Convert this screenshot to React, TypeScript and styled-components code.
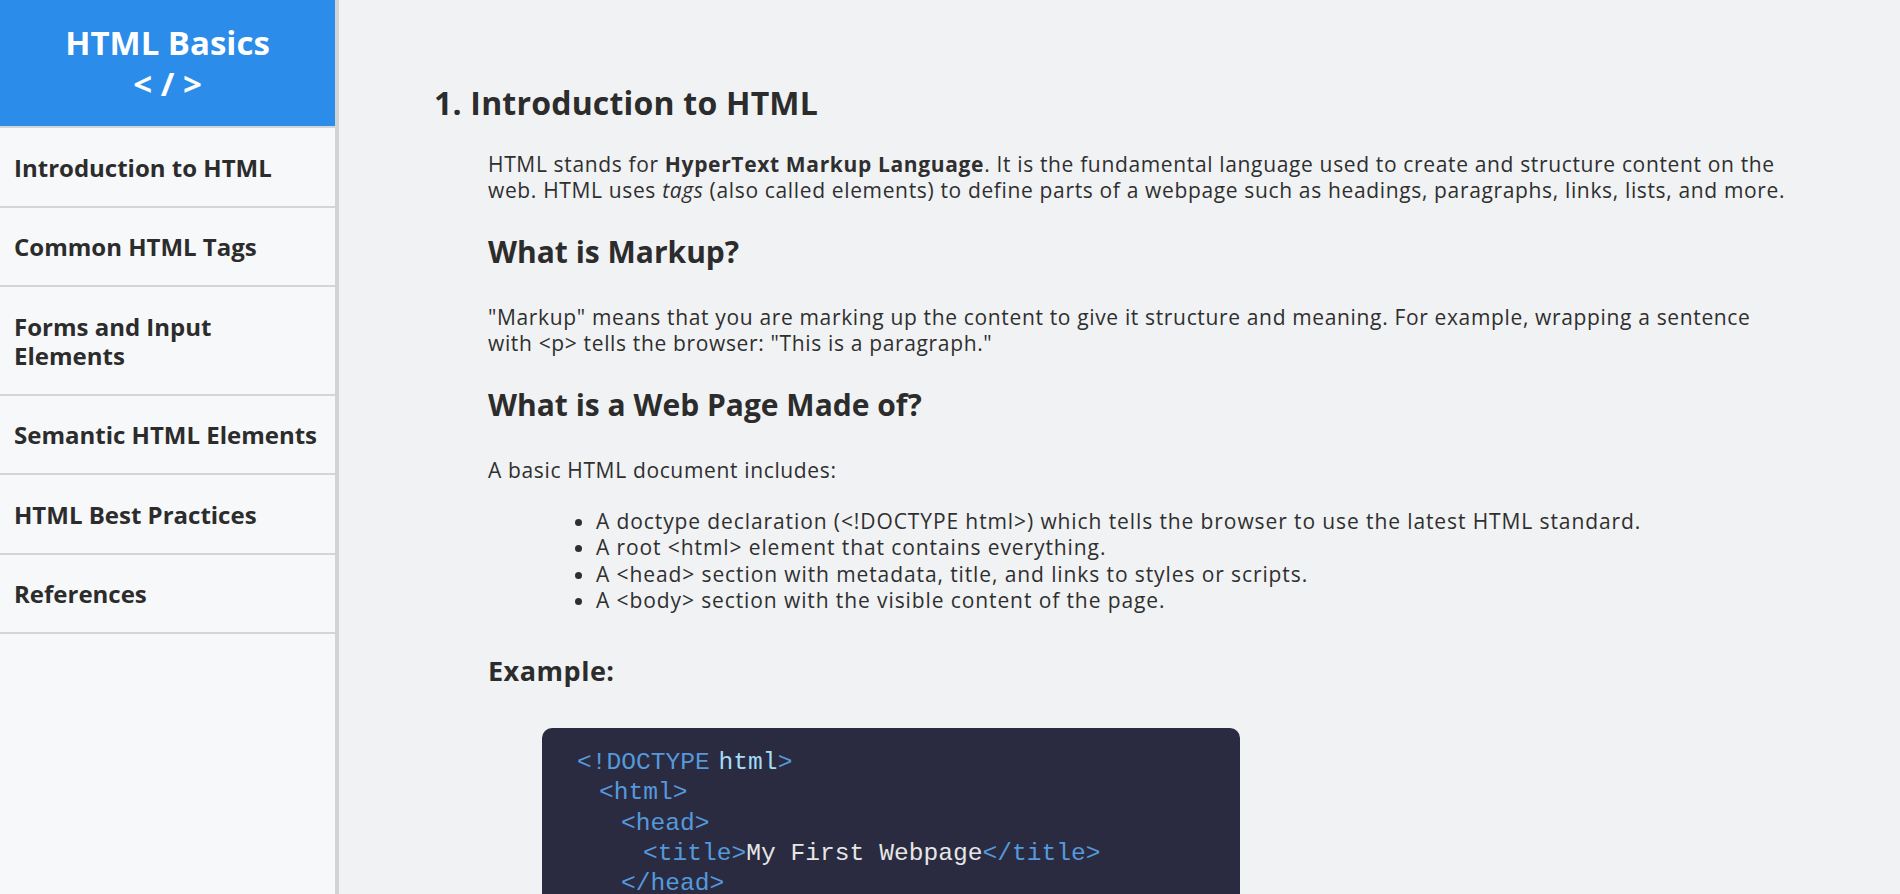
import React from "react";
import styled, { createGlobalStyle } from "styled-components";

const GlobalStyle = createGlobalStyle`
  html, body {
    margin: 0;
    padding: 0;
    background: #f1f2f4;
  }
  body {
    font-family: "Open Sans", "Noto Sans", sans-serif;
    color: #2f2f2f;
  }
  * { box-sizing: border-box; }
`;

const Layout = styled.div`
  display: flex;
  height: 100vh;
  overflow: hidden;
`;

const Sidebar = styled.aside`
  width: 339px;
  flex-shrink: 0;
  background: #f7f8fa;
  border-right: 4px solid #d2d3d5;
  display: flex;
  flex-direction: column;
`;

const Brand = styled.header`
  background: #2b8de9;
  color: #ffffff;
  text-align: center;
  font-weight: 700;
  font-size: 33px;
  line-height: 41px;
  padding: 22px 0 22px;
  border-bottom: 2px solid #d4d5d7;
`;

const NavList = styled.ul`
  list-style: none;
  margin: 0;
  padding: 0;
`;

const NavItem = styled.li`
  padding: 24.5px 10px 24px 14px;
  font-size: 24px;
  line-height: 29px;
  font-weight: 700;
  color: #2c2c2c;
  border-bottom: 2px solid #d4d5d7;
`;

const Main = styled.main`
  flex: 1;
  min-width: 0;
  padding: 83px 95px 0 95px;
  overflow: hidden;
`;

const Title = styled.h1`
  margin: 0;
  font-size: 32px;
  line-height: 40px;
  letter-spacing: 0.2px;
  font-weight: 700;
  color: #2c2c2c;
`;

const Body = styled.section`
  padding-left: 54px;
  padding-top: 28px;
`;

const Para = styled.p`
  margin: 0;
  font-size: 21px;
  line-height: 26px;
  letter-spacing: 0.65px;
`;

const SubTitle = styled.h2`
  margin: 31px 0 34px;
  font-size: 30px;
  line-height: 36px;
  font-weight: 700;
  color: #2c2c2c;
`;

const Bullets = styled.ul`
  margin: 25px 0 0;
  padding-left: 108px;
  li {
    font-size: 21px;
    line-height: 26.3px;
    letter-spacing: 0.9px;
  }
`;

const Example = styled.h3`
  margin: 43px 0 42px;
  font-size: 27px;
  line-height: 30px;
  letter-spacing: 0.5px;
  font-weight: 700;
  color: #2c2c2c;
`;

const CodeBlock = styled.div`
  margin-left: 108px;
  width: 698px;
  background: #2a2b40;
  border-radius: 10px;
  padding: 20px 35px 24px;
  font-family: "Liberation Mono", "Courier New", monospace;
  font-size: 24.6px;
  line-height: 30.25px;
  color: #e6e6e6;
`;

const CodeLine = styled.div<{ $level: number }>`
  padding-left: ${(p) => p.$level * 22}px;
  white-space: pre;
`;

const Doctype = styled.span`
  word-spacing: -6px;
`;

const Tag = styled.span`
  color: #5599dc;
`;

const Attr = styled.span`
  color: #a4dcf7;
`;

const navItems = [
  "Introduction to HTML",
  "Common HTML Tags",
  "Forms and Input Elements",
  "Semantic HTML Elements",
  "HTML Best Practices",
  "References",
];

export default function App() {
  return (
    <>
      <GlobalStyle />
      <Layout>
        <Sidebar>
          <Brand>
            HTML Basics
            <br />
            &lt; / &gt;
          </Brand>
          <NavList>
            {navItems.map((n) => (
              <NavItem key={n}>{n}</NavItem>
            ))}
          </NavList>
        </Sidebar>
        <Main>
          <Title>1. Introduction to HTML</Title>
          <Body>
            <Para>
              HTML stands for <strong>HyperText Markup Language</strong>. It is the fundamental language
              used to create and structure content on the web. HTML uses <em>tags</em> (also called
              elements) to define parts of a webpage such as headings, paragraphs, links, lists, and more.
            </Para>
            <SubTitle>What is Markup?</SubTitle>
            <Para>
              "Markup" means that you are marking up the content to give it structure and meaning. For
              example, wrapping a sentence with&nbsp;&lt;p&gt; tells the browser: "This is a paragraph."
            </Para>
            <SubTitle>What is a Web Page Made of?</SubTitle>
            <Para>A basic HTML document includes:</Para>
            <Bullets>
              <li>A doctype declaration (&lt;!DOCTYPE html&gt;) which tells the browser to use the latest HTML standard.</li>
              <li>A root &lt;html&gt; element that contains everything.</li>
              <li>A &lt;head&gt; section with metadata, title, and links to styles or scripts.</li>
              <li>A &lt;body&gt; section with the visible content of the page.</li>
            </Bullets>
            <Example>Example:</Example>
          </Body>
          <CodeBlock>
            <CodeLine $level={0}>
              <Doctype>
                <Tag>&lt;!DOCTYPE</Tag> <Attr>html</Attr>
              </Doctype>
              <Tag>&gt;</Tag>
            </CodeLine>
            <CodeLine $level={1}>
              <Tag>&lt;html&gt;</Tag>
            </CodeLine>
            <CodeLine $level={2}>
              <Tag>&lt;head&gt;</Tag>
            </CodeLine>
            <CodeLine $level={3}>
              <Tag>&lt;title&gt;</Tag>My First Webpage<Tag>&lt;/title&gt;</Tag>
            </CodeLine>
            <CodeLine $level={2}>
              <Tag>&lt;/head&gt;</Tag>
            </CodeLine>
            <CodeLine $level={2}>
              <Tag>&lt;body&gt;</Tag>
            </CodeLine>
            <CodeLine $level={3}>
              <Tag>&lt;h1&gt;</Tag>Hello, World!<Tag>&lt;/h1&gt;</Tag>
            </CodeLine>
            <CodeLine $level={2}>
              <Tag>&lt;/body&gt;</Tag>
            </CodeLine>
            <CodeLine $level={1}>
              <Tag>&lt;/html&gt;</Tag>
            </CodeLine>
          </CodeBlock>
        </Main>
      </Layout>
    </>
  );
}
